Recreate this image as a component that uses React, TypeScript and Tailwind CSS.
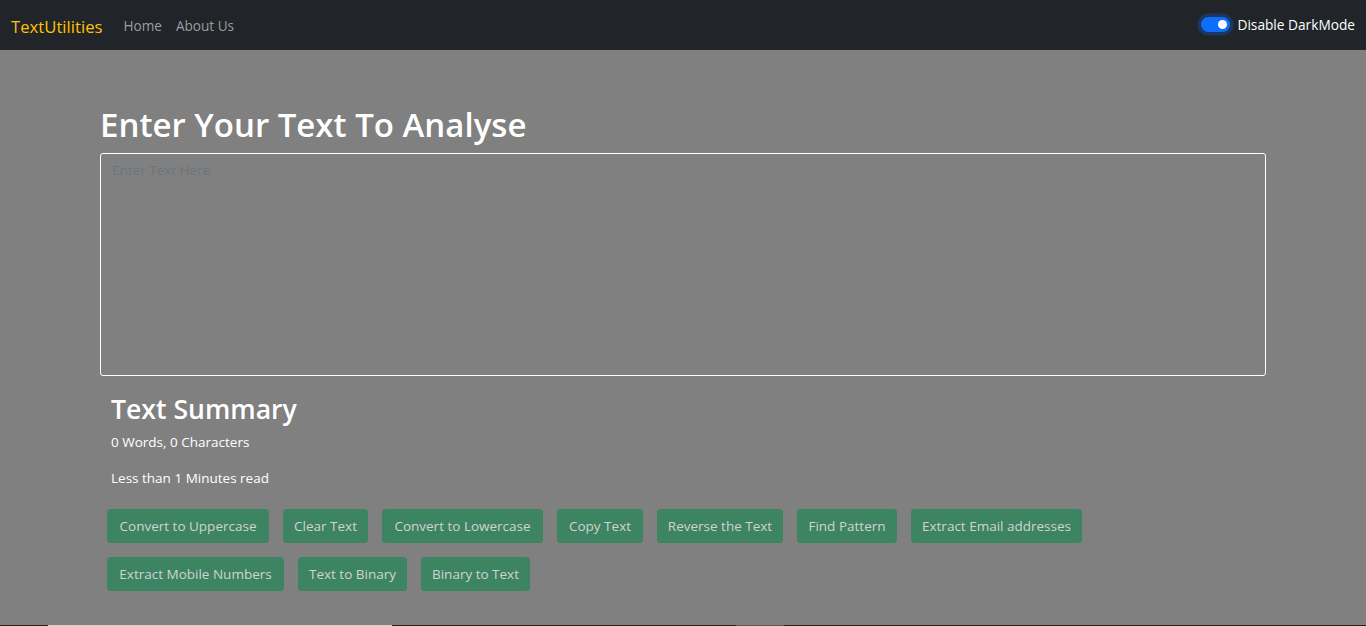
import { useState } from 'react';

const BUTTONS = [
  { label: 'Convert to Uppercase', width: 'w-[162px]' },
  { label: 'Clear Text', width: 'w-[85px]' },
  { label: 'Convert to Lowercase', width: 'w-[161px]' },
  { label: 'Copy Text', width: 'w-[86px]' },
  { label: 'Reverse the Text', width: 'w-[126px]' },
  { label: 'Find Pattern', width: 'w-[100px]' },
  { label: 'Extract Email addresses', width: 'w-[171px]' },
  { label: 'Extract Mobile Numbers', width: 'w-[177px]' },
  { label: 'Text to Binary', width: 'w-[109px]' },
  { label: 'Binary to Text', width: 'w-[109px]' }
];

function DarkModeSwitch({ enabled, onToggle }: { enabled: boolean; onToggle: () => void }) {
  return (
    <label className="flex cursor-pointer items-center gap-[7px] text-[13.7px] text-white">
      <button
        type="button"
        onClick={onToggle}
        className={
          'flex h-[15px] w-[29px] items-center rounded-full px-[3px] shadow-[0_0_0_3.6px_rgba(13,110,253,0.25)] ' +
          (enabled ? 'justify-end bg-[#0d6efd]' : 'justify-start border border-[#6c757d] bg-white')
        }
      >
        <span className={'h-[9px] w-[9px] rounded-full ' + (enabled ? 'bg-white' : 'bg-[#adb5bd]')} />
      </button>
      Disable DarkMode
    </label>
  );
}

export default function App() {
  const [text, setText] = useState('');
  const [darkMode, setDarkMode] = useState(true);

  const words = text.split(/\s+/).filter((word) => word.length > 0).length;

  return (
    <div className="flex min-h-[626px] flex-col bg-[#808080] font-['Open_Sans',sans-serif]">
      <nav className="flex h-[50px] items-center justify-between bg-[#212529] px-[11px]">
        <div className="flex items-center">
          <a href="#" className="pt-[2px] text-[16.7px] leading-[27px] text-[#ffc107]">
            TextUtilities
          </a>
          <ul className="ml-[14px] flex items-center pt-[2px] text-[13.6px]">
            <li>
              <a href="#" className="px-[7px] text-[#9b9d9f]">
                Home
              </a>
            </li>
            <li>
              <a href="#" className="px-[7px] text-[#9b9d9f]">
                About Us
              </a>
            </li>
          </ul>
        </div>
        <DarkModeSwitch enabled={darkMode} onToggle={() => setDarkMode(!darkMode)} />
      </nav>

      <main className="flex-1">
        <div className="mx-auto w-[1166px] pt-[53px]">
          <h1 className="mb-[7px] text-[33px] leading-[43px] font-semibold text-white">Enter Your Text To Analyse</h1>
          <textarea
            value={text}
            onChange={(event) => setText(event.target.value)}
            placeholder="Enter Text Here"
            className="block h-[223px] w-full resize-none rounded-[3px] border border-white bg-[#808080] px-[11px] py-[6px] text-[13.5px] text-white placeholder:text-[#6c757d] focus:outline-none"
          />

          <div className="mt-[16px] px-[11px]">
            <h2 className="mb-[5px] text-[26.6px] leading-[35px] font-semibold text-white">Text Summary</h2>
            <p className="mb-[14px] text-[13.5px] leading-[21.6px] text-white">
              {words} Words, {text.length} Characters
            </p>
            <p className="mb-[20px] text-[13.5px] leading-[21.6px] text-white">
              Less than {Math.ceil(0.008 * words) || 1} Minutes read
            </p>
          </div>

          <div className="flex flex-wrap gap-[14px] pl-[7px]">
            {BUTTONS.map((button) => (
              <button
                key={button.label}
                type="button"
                disabled={text.length === 0}
                className={
                  button.width +
                  ' h-[34px] rounded-[3.5px] bg-[#3d8463] text-center text-[13.5px] whitespace-nowrap text-[#d2d2d2]'
                }
              >
                {button.label}
              </button>
            ))}
          </div>
        </div>
      </main>

      <div className="flex h-px">
        <div className="w-[48px] bg-[#222222]" />
        <div className="w-[344px] bg-[#d0d0d0]" />
        <div className="w-[344px] bg-[#222222]" />
        <div className="w-[48px] bg-[#5a5a5a]" />
        <div className="flex-1 bg-[#222222]" />
      </div>
    </div>
  );
}
